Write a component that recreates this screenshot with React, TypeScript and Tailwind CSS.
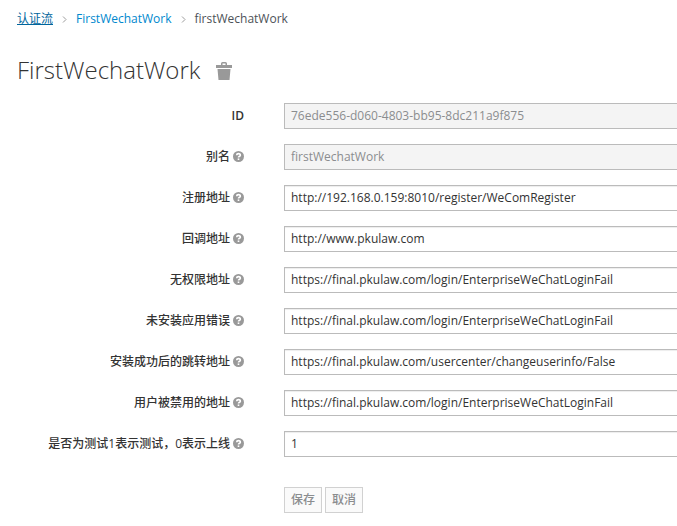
import React from 'react';

type Row = { label: string; value: string; disabled?: boolean; help?: boolean };

const rows: Row[] = [
  { label: 'ID', value: '76ede556-d060-4803-bb95-8dc211a9f875', disabled: true, help: false },
  { label: '别名', value: 'firstWechatWork', disabled: true },
  { label: '注册地址', value: 'http://192.168.0.159:8010/register/WeComRegister' },
  { label: '回调地址', value: 'http://www.pkulaw.com' },
  { label: '无权限地址', value: 'https://final.pkulaw.com/login/EnterpriseWeChatLoginFail' },
  { label: '未安装应用错误', value: 'https://final.pkulaw.com/login/EnterpriseWeChatLoginFail' },
  { label: '安装成功后的跳转地址', value: 'https://final.pkulaw.com/usercenter/changeuserinfo/False' },
  { label: '用户被禁用的地址', value: 'https://final.pkulaw.com/login/EnterpriseWeChatLoginFail' },
  { label: '是否为测试1表示测试，0表示上线', value: '1' },
];

function HelpIcon() {
  return (
    <svg className="mb-px ml-[3px] size-[11px] shrink-0" viewBox="0 0 12 12">
      <circle cx="6" cy="6" r="6" fill="#999" />
      <path d="M4 4.6C4.1 2.3 8 2.3 8 4.5C8 5.8 6 5.7 6 7.2" fill="none" stroke="#fff" strokeWidth="1.8" />
      <path d="M5.1 8.1h1.8v1.7H5.1z" fill="#fff" />
    </svg>
  );
}

function Chevron() {
  return (
    <svg className="mx-[9px] h-[7px] w-[5px]" viewBox="0 0 5 7" fill="none" stroke="#9c9c9c" strokeWidth="1">
      <path d="M1 .5l3 3-3 3" />
    </svg>
  );
}

export default function App() {
  return (
    <div className="h-[526px] w-[677px] overflow-hidden bg-white font-['Open_Sans','Noto_Sans_CJK_SC',sans-serif] text-[12px] leading-5 text-[#333]">
      <nav className="flex h-[38px] items-center pl-[17px]">
        <a className="text-[#00659c] underline">认证流</a>
        <Chevron />
        <a className="text-[#0088ce]">FirstWechatWork</a>
        <Chevron />
        <span className="text-[#4d5258]">firstWechatWork</span>
      </nav>
      <h1 className="flex h-[65px] items-center pb-px pl-[17px] text-[24px] font-light">
        FirstWechatWork
        <svg className="mt-px ml-[16px] h-[18px] w-[16px]" viewBox="0 0 16 18" fill="#999">
          <path fillRule="evenodd" d="M0 3h5V1.5Q5 0 6.5 0h3Q11 0 11 1.5V3h5v3H0zM6.5 3h3V1.5h-3zM1.5 7h13l-1 11h-11z" />
        </svg>
      </h1>
      <form className="flex flex-col gap-[15px]">
        {rows.map((r) => (
          <div key={r.label} className="flex h-[26px] w-[700px] items-center">
            <label className={`flex w-[284px] items-center justify-end pr-[40px] ${r.help === false ? 'font-semibold' : 'font-medium'}`}>
              {r.label}
              {r.help !== false && <HelpIcon />}
            </label>
            <div className={`flex h-[26px] flex-1 items-center border border-[#bbb] px-[6px] ${r.disabled ? 'bg-[#f4f4f4] text-[#8b8d8f]' : 'bg-white shadow-[inset_0_1px_1px_rgba(0,0,0,0.075)]'}`}>
              {r.value}
            </div>
          </div>
        ))}
        <div className="mt-[15px] flex gap-[3px] pl-[284px]">
          <button type="button" className="h-[26px] w-[38px] border border-[#d1d1d1] bg-[#fafafa] font-medium text-[#8b8d8f]">保存</button>
          <button type="button" className="h-[26px] w-[38px] border border-[#d1d1d1] bg-[#fafafa] font-medium text-[#8b8d8f]">取消</button>
        </div>
      </form>
    </div>
  );
}
